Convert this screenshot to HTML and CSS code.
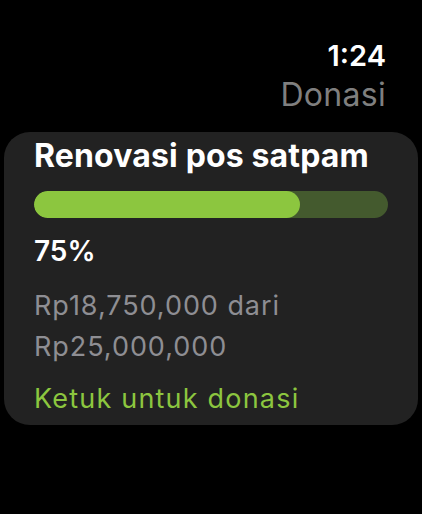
FILE: index.html
```html
<!DOCTYPE html>
<html lang="id">
<head>
<meta charset="UTF-8">
<title>Donasi</title>
<meta name="viewport" content="width=device-width, initial-scale=1.0">
<link rel="stylesheet" href="styles.css">
</head>
<body>

<header>
    <div class="jam">1:24</div>
    <div class="judul-app">Donasi</div>
</header>

<div class="kartu">
    <h3>Renovasi pos satpam</h3>
    <div class="bar">
        <div class="bar-isi" style="width: 75%;"></div>
    </div>
    <div class="persen">75%</div>
    <div class="jumlah">Rp18,750,000 dari<br>Rp25,000,000</div>
    <div class="aksi">Ketuk untuk donasi</div>
</div>

</body>
</html>
```

FILE: styles.css
```css
body {
    font-family: Inter, "Noto Sans", sans-serif;
    background: #000;
    color: white;
    margin: 0;
    padding: 0;
}
header {
    display: flex;
    flex-direction: column;
    align-items: flex-end;
    padding: 38px 36px 0 0;
}
.jam {
    font-size: 29px;
    font-weight: 600;
    line-height: 36px;
}
.judul-app {
    font-size: 32px;
    line-height: 40px;
    margin-top: 1px;
    color: #7f7f7f;
    letter-spacing: 0.3px;
}
.kartu {
    background: #222;
    margin: 17px 4px 0 4px;
    padding: 4px 30px 6px 30px;
    border-radius: 26px;
}
.kartu h3 {
    margin: 0;
    font-size: 32px;
    font-weight: 700;
    line-height: 40px;
    letter-spacing: 0.15px;
}
.bar {
    margin-top: 15px;
    height: 27px;
    border-radius: 14px;
    background: #445a2e;
    overflow: hidden;
}
.bar-isi {
    height: 100%;
    background: #8cc63f;
    border-radius: 14px;
}
.persen {
    margin-top: 16px;
    font-size: 28px;
    font-weight: 600;
    line-height: 34px;
}
.jumlah {
    margin-top: 17px;
    font-size: 27px;
    line-height: 41px;
    color: #8e8e93;
    letter-spacing: 0.95px;
}
.aksi {
    margin-top: 12px;
    font-size: 27px;
    line-height: 40px;
    color: #8cc63f;
    letter-spacing: 1.2px;
}
```
